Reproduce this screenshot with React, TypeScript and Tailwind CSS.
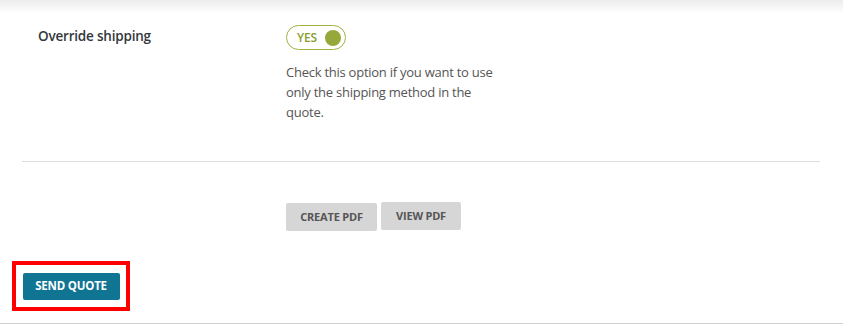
import React from "react";

export default function App() {
  return (
    <div
      className="w-[843px] h-[325px] relative bg-white bg-[linear-gradient(#ececec,#ffffff_14px)] text-[#333]"
      style={{ fontFamily: '"Open Sans", "Noto Sans", sans-serif' }}
    >
      <div className="pt-[25px] px-[22px]">
        <div className="flex pl-[16px]">
          <div className="w-[248px] pt-[1px] text-[13.5px] leading-[20px] font-semibold text-[#32373c] tracking-[-0.2px]">
            Override shipping
          </div>
          <div className="flex flex-col">
            <div className="w-[60px] h-[25px] rounded-full border border-[#a0b042] flex items-center justify-between pl-[10px] pr-[4px]">
              <span className="text-[12px] font-semibold text-[#8a9e2e] leading-none tracking-[-0.2px]">YES</span>
              <span className="w-[16px] h-[16px] rounded-full bg-[#97a83a]"></span>
            </div>
            <p className="mt-[12px] w-[215px] text-[13px] leading-[20px] text-[#555] tracking-[-0.25px]">
              Check this option if you want to use only the shipping method in the quote.
            </p>
          </div>
        </div>
        <div className="mt-[39px] mr-[1px] h-px bg-[#dcdcdc]"></div>
        <div className="flex pl-[264px] mt-[41px] gap-[4px] items-start">
          <button className="h-[28px] w-[91px] rounded-[2px] bg-[#d6d6d6] text-[11px] font-bold text-[#555] tracking-[-0.2px]">
            CREATE PDF
          </button>
          <button className="-mt-[1px] h-[28px] w-[80px] rounded-[2px] bg-[#d6d6d6] text-[11px] font-bold text-[#555] tracking-[-0.2px]">
            VIEW PDF
          </button>
        </div>
      </div>
      <div className="mt-[30px] ml-[12px] w-[118px] h-[50px] border-[4px] border-[#ff0000] flex items-center justify-center">
        <button className="h-[27px] w-[97px] rounded-[2px] bg-[#0f7593] text-white text-[11.5px] font-bold tracking-[-0.2px]">
          SEND QUOTE
        </button>
      </div>
      <div className="absolute left-0 right-0 bottom-[1px] h-px bg-[#cfcfcf]"></div>
    </div>
  );
}
